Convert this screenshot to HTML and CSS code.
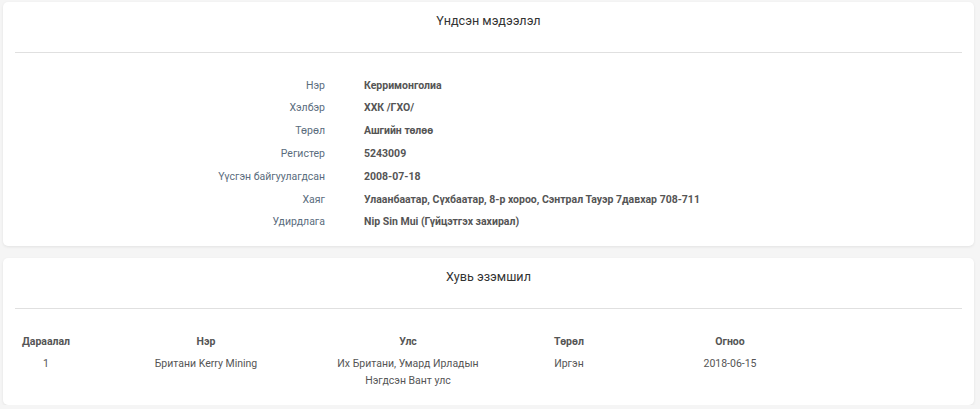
FILE: index.html
```html
<!DOCTYPE html>
<html lang="mn">
<head>
<meta charset="utf-8">
<link rel="stylesheet" href="styles.css">
</head>
<body>
<section class="card card-info">
  <div class="card-head"><h2 class="card-title">Үндсэн мэдээлэл</h2></div>
  <dl class="info">
    <dt>Нэр</dt><dd>Керримонголиа</dd>
    <dt>Хэлбэр</dt><dd>ХХК /ГХО/</dd>
    <dt>Төрөл</dt><dd>Ашгийн төлөө</dd>
    <dt>Регистер</dt><dd>5243009</dd>
    <dt>Үүсгэн байгуулагдсан</dt><dd>2008-07-18</dd>
    <dt>Хаяг</dt><dd>Улаанбаатар, Сүхбаатар, 8-р хороо, Сэнтрал Тауэр 7давхар 708-711</dd>
    <dt>Удирдлага</dt><dd>Nip Sin Mui (Гүйцэтгэх захирал)</dd>
  </dl>
</section>
<section class="card card-owners">
  <div class="card-head"><h2 class="card-title">Хувь эзэмшил</h2></div>
  <table class="owners">
    <colgroup>
      <col class="c1"><col class="c2"><col class="c3"><col class="c4"><col class="c5"><col class="c6">
    </colgroup>
    <thead>
      <tr><th>Дараалал</th><th>Нэр</th><th>Улс</th><th>Төрөл</th><th>Огноо</th><th></th></tr>
    </thead>
    <tbody>
      <tr><td>1</td><td>Британи Kerry Mining</td><td>Их Британи, Умард Ирладын Нэгдсэн Вант улс</td><td>Иргэн</td><td>2018-06-15</td><td></td></tr>
    </tbody>
  </table>
</section>
</body>
</html>
```
FILE: styles.css
```css
* { box-sizing: border-box; }
html, body { margin: 0; padding: 0; }
body {
  background: #f5f5f5;
  font-family: Roboto, "Liberation Sans", Arial, sans-serif;
  font-size: 10.5px;
  color: #555;
  padding: 2px 6px 0 3px;
}
.card {
  background: #fff;
  border-radius: 5px;
  box-shadow: 0 1px 3px rgba(0, 0, 0, 0.08);
  padding: 0 12px;
}
.card + .card { margin-top: 12px; }
.card-owners { padding-bottom: 15.5px; }
.card-head {
  height: 51px;
  padding-top: 9px;
  border-bottom: 1px solid #e0e0e0;
}
.card-title {
  margin: 0;
  font-family: Roboto, "Liberation Sans", Arial, sans-serif;
  font-weight: normal;
  font-size: 12.6px;
  line-height: 20px;
  color: #333;
  text-align: center;
}
.info {
  margin: 0;
  padding: 21.5px 0 12px;
  display: grid;
  grid-template-columns: 310px 1fr;
  column-gap: 39px;
  line-height: 22.83px;
}
.info dt {
  text-align: right;
  color: #5a6c7d;
}
.info dd {
  margin: 0;
  font-weight: bold;
  color: #555;
}
.owners {
  margin-top: 24px;
  border-collapse: collapse;
  table-layout: fixed;
  width: 100%;
}
.owners .c1 { width: 62px; }
.owners .c2 { width: 258px; }
.owners .c3 { width: 146px; }
.owners .c4 { width: 176px; }
.owners .c5 { width: 146px; }
.owners th, .owners td {
  padding: 0;
  line-height: 17px;
  text-align: center;
  vertical-align: top;
  color: #555;
}
.owners th { font-weight: bold; padding-bottom: 5px; }
.owners td { font-weight: normal; }
```
